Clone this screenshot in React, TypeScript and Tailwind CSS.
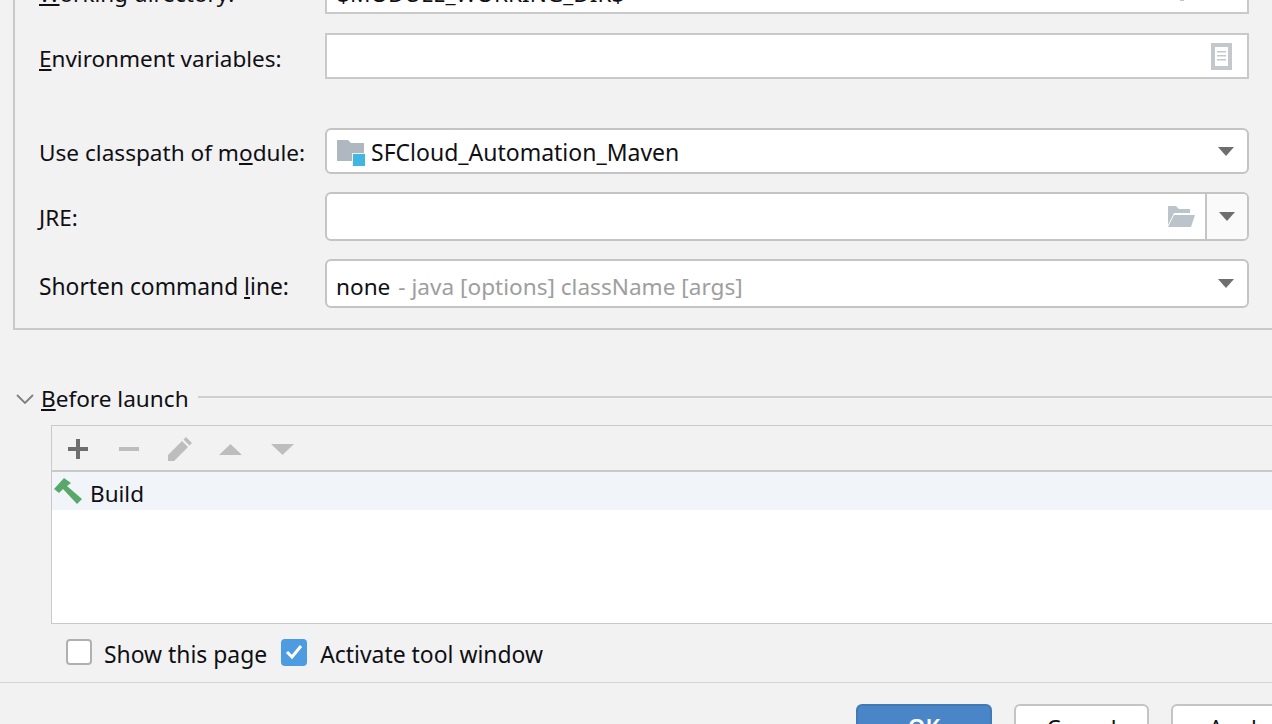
import { ReactNode } from 'react';

const font = { fontFamily: '"Noto Sans", "Open Sans", sans-serif' };

function Caret({ color = '#6e6e6e' }: { color?: string }) {
  return (
    <svg width="16" height="9" viewBox="0 0 16 9" className="block">
      <path d="M0 0h16l-8 9z" fill={color} />
    </svg>
  );
}

function FolderOpen() {
  return (
    <svg width="28" height="22" viewBox="0 0 28 22" className="block">
      <path d="M1 0h8l3 3h11v4H7L1 19z" fill="#bcc4cb" />
      <path d="M7 9h21l-4 12H1z" fill="#bcc4cb" />
    </svg>
  );
}

function Label({ children }: { children: ReactNode }) {
  return <div className="w-[286px] shrink-0 pt-[6px] text-[22.5px] leading-[32px] text-[#0f0f14] whitespace-nowrap">{children}</div>;
}

function FormRow({ label, className, children }: { label: ReactNode; className: string; children: ReactNode }) {
  return (
    <div className={`flex items-center ${className}`}>
      <Label>{label}</Label>
      {children}
    </div>
  );
}

function Combo({ children }: { children: ReactNode }) {
  return (
    <div className="flex flex-1 h-full items-center bg-white border-2 border-[#c4c4c4] rounded-[6px] pl-[9px] pr-[13px]">
      <div className="flex flex-1 items-center text-[22.6px] text-[#0f0f14] whitespace-nowrap">{children}</div>
      <Caret />
    </div>
  );
}

function ToolIcon({ children }: { children: ReactNode }) {
  return <div className="w-[51px] flex items-center justify-center">{children}</div>;
}

export default function App() {
  return (
    <div className="h-[724px] w-[1272px] overflow-hidden bg-[#f2f2f2]" style={font}>
      <div className="-mt-[32px]">
        {/* Run configuration fields */}
        <div className="ml-[13px] h-[362px] border-l-2 border-b-2 border-[#c9c9c9] pl-[24px] pr-[23px]">
          <FormRow label={<><u>W</u>orking directory:</>} className="h-[46px]">
            <div className="flex flex-1 h-full items-center bg-white border-2 border-[#c9c9c9] pl-[10px] pr-[15px]">
              <span className="flex-1 pt-[6px] text-[22.6px] text-[#0f0f14]">$MODULE_WORKING_DIR$</span>
              <svg width="60" height="24" viewBox="0 0 60 24" className="block">
                <path d="M8 6h4v6h6v4h-6v6H8v-6H2v-4h6z" fill="#bcc4cb" />
                <path d="M36 2h8l3 3h11v4H42l-6 12zM42 11h18l-4 10H36z" fill="#bcc4cb" />
              </svg>
            </div>
          </FormRow>
          <FormRow label={<><u>E</u>nvironment variables:</>} className="h-[46px] mt-[19px]">
            <div className="flex flex-1 h-full items-center justify-end bg-white border-2 border-[#c9c9c9] pr-[15px]">
              <svg width="21" height="27" viewBox="0 0 21 27" className="block">
                <path d="M0 0h21v27H0z" fill="#c4c8cc" />
                <path d="M4 4h13v19H4z" fill="#fff" />
                <path d="M6 8h9v1.6H6zM6 12h9v1.6H6zM6 16h9v1.6H6z" fill="#c4c8cc" />
              </svg>
            </div>
          </FormRow>
          <FormRow label={<span className="block -mt-[2px] text-[22.6px]">Use classpath of m<u>o</u>dule:</span>} className="h-[46px] mt-[49px]">
            <Combo>
              <svg width="28" height="26" viewBox="0 0 28 26" className="block ml-[1px] mr-[6px] mt-[4px]">
                <path d="M0 0h11l3 3h13v18H0z" fill="#afb8c1" />
                <path d="M15 13h13v13H15z" fill="#f2f2f2" />
                <path d="M16 14h12v12H16z" fill="#40b6e0" />
              </svg>
              <span className="pt-[2px] text-[23px]">SFCloud_Automation_Maven</span>
            </Combo>
          </FormRow>
          <FormRow label={<span className="block -mt-[4px]"><u>J</u>RE:</span>} className="h-[49px] mt-[18px]">
            <div className="flex flex-1 h-full bg-white border-2 border-[#c4c4c4] rounded-[6px] overflow-hidden">
              <div className="flex flex-1 items-center justify-end pr-[10px]">
                <FolderOpen />
              </div>
              <div className="w-[42px] flex items-center justify-center border-l-2 border-[#c4c4c4] bg-[#fafafa]">
                <Caret />
              </div>
            </div>
          </FormRow>
          <FormRow label={<span className="text-[22.8px]">Shorten command <u>l</u>ine:</span>} className="h-[49px] mt-[18px]">
            <Combo>
              <span className="pt-[6px]">none<span className="text-[#9e9e9e] ml-[8px]">- java [options] className [args]</span></span>
            </Combo>
          </FormRow>
        </div>

        {/* Before launch */}
        <div className="flex items-center h-[32px] mt-[53px] pl-[16px]">
          <svg width="18" height="10" viewBox="0 0 18 10" className="block" fill="none">
            <path d="M1 1l8 8 8-8" stroke="#7f7f7f" strokeWidth="1.8" />
          </svg>
          <span className="ml-[7px] text-[22.6px] text-[#0f0f14]"><u>B</u>efore launch</span>
          <div className="flex-1 ml-[9px] -mt-[4px] h-[2px] bg-[#d0d0d0]" />
        </div>
        <div className="ml-[51px] mt-[10px] h-[199px] border-l border-t border-b border-[#c9c9c9] bg-white">
          <div className="flex items-center h-[46px] pt-[2px] bg-[#f2f2f2] border-b-2 border-[#c9c9c9]">
            <ToolIcon>
              <svg width="20" height="20" viewBox="0 0 20 20" className="block"><path d="M8 0h4v8h8v4h-8v8H8v-8H0V8h8z" fill="#6e6e6e" /></svg>
            </ToolIcon>
            <ToolIcon>
              <svg width="20" height="4" viewBox="0 0 20 4" className="block"><path d="M0 0h20v4H0z" fill="#bdbdbd" /></svg>
            </ToolIcon>
            <ToolIcon>
              <svg width="26" height="26" viewBox="0 0 26 26" className="block ml-[1px]">
                <path d="M19 1l6 6-2.5 2.5-6-6zM15 5l6 6L7 25H1v-6z" fill="#bdbdbd" />
              </svg>
            </ToolIcon>
            <ToolIcon>
              <svg width="23" height="11" viewBox="0 0 23 11" className="block"><path d="M11.5 0L23 11H0z" fill="#bdbdbd" /></svg>
            </ToolIcon>
            <ToolIcon>
              <svg width="23" height="11" viewBox="0 0 23 11" className="block ml-[2px]"><path d="M0 0h23L11.5 11z" fill="#bdbdbd" /></svg>
            </ToolIcon>
          </div>
          <div className="flex items-center h-[38px] bg-[#f1f5fa] text-[22.5px] text-[#0f0f14]">
            <svg width="28" height="26" viewBox="0 0 28 26" className="block ml-[2px] mr-[8px]">
              <path d="M0 11L10 0l7 5-4 3 15 13-5 5L9 11l-4 4z" fill="#59a869" />
            </svg>
            <span className="pt-[6px]">Build</span>
          </div>
        </div>

        {/* Options */}
        <div className="flex items-center h-[32px] mt-[14px] ml-[66px] text-[22.9px] text-[#0f0f14]">
          <div className="-mt-[4px] w-[26px] h-[26px] bg-white border-2 border-[#b0b0b0] rounded-[4px]" />
          <span className="ml-[12px] pt-[3px]">Show this page</span>
          <div className="-mt-[4px] ml-[14px] w-[26px] h-[27px] flex items-center justify-center bg-[#4d9be0] rounded-[4px]">
            <svg width="18" height="16" viewBox="0 0 18 16" className="block" fill="none">
              <path d="M2 8l5 5 9-11" stroke="#fff" strokeWidth="3" />
            </svg>
          </div>
          <span className="ml-[13px] pt-[3px]">Activate tool window</span>
        </div>
        <div className="h-[1px] mt-[12px] bg-[#d4d4d4]" />

        {/* Dialog buttons */}
        <div className="flex mt-[21px] ml-[856px] gap-[22px] text-[22.5px]">
          <div className="shrink-0 w-[136px] h-[48px] flex items-center justify-center rounded-[6px] bg-[#4a86c7] border-2 border-[#3f7ab8] text-white font-semibold">OK</div>
          <div className="shrink-0 w-[135px] h-[48px] flex items-center justify-center rounded-[6px] bg-white border-2 border-[#c4c4c4] text-[#0f0f14]">Cancel</div>
          <div className="shrink-0 w-[135px] h-[48px] flex items-center justify-center rounded-[6px] bg-white border-2 border-[#c4c4c4] text-[#0f0f14]">Apply</div>
        </div>
      </div>
    </div>
  );
}
